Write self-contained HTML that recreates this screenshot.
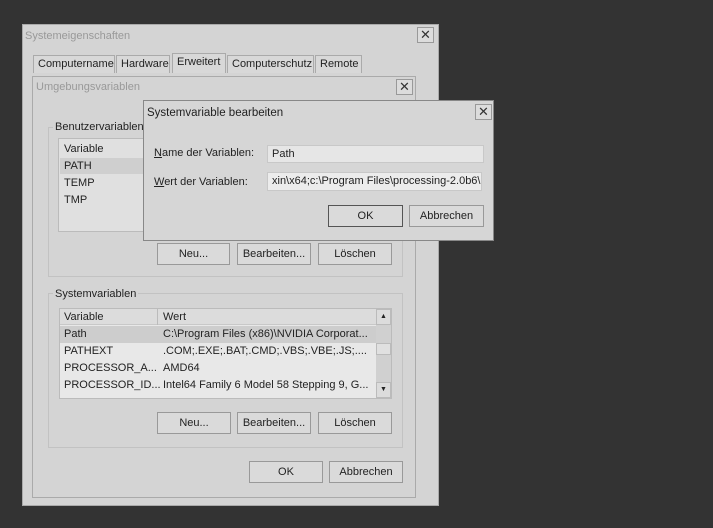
<!DOCTYPE html>
<html><head><meta charset="utf-8"><style>
*{box-sizing:border-box;margin:0;padding:0}
body{width:713px;height:528px;background:#333;position:relative;overflow:hidden;font-family:"Liberation Sans",sans-serif;font-size:11px;color:#222}
.a{position:absolute}
.win{background:#d4d4d4;border:1px solid #aaa}
.x{position:absolute;width:17px;height:16px;border:1px solid #999;background:#dcdcdc;text-align:center;line-height:13px;font-size:13px;color:#333}
.btn{position:absolute;height:22px;border:1px solid #999;background:#dadada;text-align:center;line-height:20px}
.tab{position:absolute;top:55px;height:18px;border:1px solid #aaa;border-bottom:none;background:#d8d8d8;padding:2px 4px;line-height:13px}
.t{position:absolute;white-space:nowrap}
.inp{position:absolute;background:#e6e6e6;border:1px solid #c8c8c8;padding:2px 4px;line-height:13px;white-space:nowrap;overflow:hidden}
.grp{position:absolute;border:1px solid #c2c2c2}
</style></head><body>
<div class="a win" style="left:22px;top:24px;width:417px;height:482px"></div>
<div class="t" style="left:25px;top:30px;color:#999">Systemeigenschaften</div>
<div class="x" style="left:417px;top:27px">✕</div>
<div class="tab" style="left:33px;width:82px">Computername</div>
<div class="tab" style="left:116px;width:54px">Hardware</div>
<div class="tab" style="left:172px;top:53px;width:54px;height:20px">Erweitert</div>
<div class="tab" style="left:227px;width:87px">Computerschutz</div>
<div class="tab" style="left:315px;width:47px">Remote</div>

<div class="a win" style="left:32px;top:76px;width:384px;height:422px"></div>
<div class="t" style="left:36px;top:81px;color:#999">Umgebungsvariablen</div>
<div class="x" style="left:396px;top:79px">✕</div>
<div class="grp" style="left:48px;top:127px;width:355px;height:150px"></div>
<div class="t" style="left:53px;top:121px;background:#d4d4d4;padding:0 2px">Benutzervariablen</div>
<div class="a" style="left:58px;top:138px;width:334px;height:94px;background:#e0e0e0;border:1px solid #bbb"></div>
<div class="t" style="left:64px;top:143px">Variable</div>
<div class="a" style="left:60px;top:158px;width:90px;height:16px;background:#cfcfcf"></div>
<div class="t" style="left:64px;top:160px">PATH</div>
<div class="t" style="left:64px;top:177px">TEMP</div>
<div class="t" style="left:64px;top:194px">TMP</div>
<div class="btn" style="left:157px;top:243px;width:73px">Neu...</div>
<div class="btn" style="left:237px;top:243px;width:74px">Bearbeiten...</div>
<div class="btn" style="left:318px;top:243px;width:74px">Löschen</div>

<div class="grp" style="left:48px;top:293px;width:355px;height:155px"></div>
<div class="t" style="left:53px;top:288px;background:#d4d4d4;padding:0 2px">Systemvariablen</div>
<div class="a" style="left:59px;top:308px;width:333px;height:91px;background:#e8e8e8;border:1px solid #bbb"></div>
<div class="a" style="left:60px;top:309px;width:316px;height:16px;background:#dcdcdc;border-bottom:1px solid #c8c8c8"></div>
<div class="a" style="left:157px;top:309px;width:1px;height:16px;background:#bbb"></div>
<div class="t" style="left:64px;top:311px">Variable</div>
<div class="t" style="left:163px;top:311px">Wert</div>
<div class="a" style="left:60px;top:326px;width:316px;height:17px;background:#cdcdcd"></div>
<div class="t" style="left:64px;top:328px">Path</div><div class="t" style="left:163px;top:328px">C:\Program Files (x86)\NVIDIA Corporat...</div>
<div class="t" style="left:64px;top:345px">PATHEXT</div><div class="t" style="left:163px;top:345px">.COM;.EXE;.BAT;.CMD;.VBS;.VBE;.JS;....</div>
<div class="t" style="left:64px;top:362px">PROCESSOR_A...</div><div class="t" style="left:163px;top:362px">AMD64</div>
<div class="t" style="left:64px;top:379px">PROCESSOR_ID...</div><div class="t" style="left:163px;top:379px">Intel64 Family 6 Model 58 Stepping 9, G...</div>
<div class="a" style="left:376px;top:309px;width:15px;height:89px;background:#d0d0d0"></div>
<div class="a" style="left:376px;top:309px;width:15px;height:16px;background:#dcdcdc;border:1px solid #bbb;text-align:center;font-size:7px;line-height:14px">▲</div>
<div class="a" style="left:376px;top:343px;width:15px;height:12px;background:#e0e0e0;border:1px solid #bbb"></div>
<div class="a" style="left:376px;top:382px;width:15px;height:16px;background:#dcdcdc;border:1px solid #bbb;text-align:center;font-size:7px;line-height:14px">▼</div>
<div class="btn" style="left:157px;top:412px;width:74px">Neu...</div>
<div class="btn" style="left:237px;top:412px;width:74px">Bearbeiten...</div>
<div class="btn" style="left:318px;top:412px;width:74px">Löschen</div>
<div class="btn" style="left:249px;top:461px;width:74px">OK</div>
<div class="btn" style="left:329px;top:461px;width:74px">Abbrechen</div>

<div class="a win" style="left:143px;top:100px;width:351px;height:141px;border-color:#888;background:#d6d6d6"></div>
<div class="t" style="left:147px;top:107px;font-size:11.5px">Systemvariable bearbeiten</div>
<div class="x" style="left:475px;top:104px">✕</div>
<div class="t" style="left:154px;top:147px"><u>N</u>ame der Variablen:</div>
<div class="t" style="left:154px;top:176px"><u>W</u>ert der Variablen:</div>
<div class="inp" style="left:267px;top:145px;width:217px;height:18px">Path</div>
<div class="inp" style="left:267px;top:172px;width:215px;height:19px;background:#ececec">xin\x64;c:\Program Files\processing-2.0b6\</div>
<div class="btn" style="left:328px;top:205px;width:75px;border:1px solid #555">OK</div>
<div class="btn" style="left:409px;top:205px;width:75px">Abbrechen</div>
</body></html>
